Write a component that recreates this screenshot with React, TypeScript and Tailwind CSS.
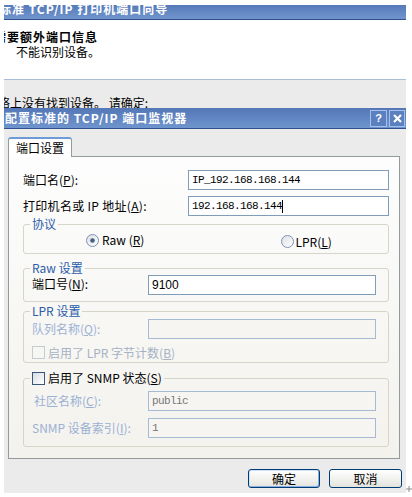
import type { ReactNode } from "react"

function Key({ k }: { k: string }) {
  return (
    <>
      (<span className="underline underline-offset-[1px]">{k}</span>)
    </>
  )
}

function Radio({ checked }: { checked?: boolean }) {
  return (
    <svg width="13" height="13" viewBox="0 0 13 13" className="shrink-0">
      <defs>
        <linearGradient id="radioFill" x1="0" y1="0" x2="1" y2="1">
          <stop offset="0%" stopColor="#dcdfe4" />
          <stop offset="100%" stopColor="#ffffff" />
        </linearGradient>
      </defs>
      <circle cx="6.5" cy="6.5" r="6" fill="url(#radioFill)" stroke="#7d93b2" />
      {checked && <circle cx="6.5" cy="6.5" r="2.3" fill="#45607f" />}
    </svg>
  )
}

function Checkbox({ disabled }: { disabled?: boolean }) {
  return (
    <div
      className={`w-[13px] h-[13px] shrink-0 border ${
        disabled
          ? "border-[#c5ccd6] bg-[#f6f6f3]"
          : "border-[#3b5676] bg-gradient-to-br from-[#d8dde4] to-white"
      }`}
    />
  )
}

function Group({ legend, children, className, inner }: { legend: ReactNode; children: ReactNode; className: string; inner: string }) {
  return (
    <fieldset className={`rounded-[3px] border border-[#d5d5c8] ${className}`}>
      <legend className="ml-[6px] px-[2px] h-[14px] leading-[14px] text-[#2b5caa]">{legend}</legend>
      <div className={inner}>{children}</div>
    </fieldset>
  )
}

function Field({ value, disabled, mono = true, caret }: { value: string; disabled?: boolean; mono?: boolean; caret?: boolean }) {
  return (
    <div
      className={`flex items-center h-[20px] border px-[3px] ${
        disabled ? "border-[#a7bad3] bg-[#f6f5f1] text-[#777777]" : "border-[#7f9db9] bg-white text-black"
      } ${mono ? "font-['Liberation_Mono',monospace] text-[11px] tracking-[-0.6px]" : "font-['Liberation_Sans',Arial,sans-serif] text-[12px]"}`}
    >
      <span className="whitespace-pre">{value}</span>
      {caret && <span className="w-px h-[13px] bg-black" />}
    </div>
  )
}

export default function App() {
  return (
    <div className="relative w-[412px] h-[497px] overflow-hidden bg-white text-[12px] leading-[14px] text-black font-['Noto_Sans_CJK_SC','Noto_Sans',sans-serif]">
      {/* wizard window behind */}
      <div className="ml-[4px] w-[402px] h-[493px] flex flex-col overflow-hidden">
        <div className="h-[5px] bg-white" />
        <div className="h-[15px] overflow-hidden bg-gradient-to-b from-[#5679b8] to-[#7196cd] border-b border-[#2f4f90]">
          <div className="-mt-[3px] -ml-[5px] font-bold text-white tracking-[1px] whitespace-nowrap">
            标准 TCP/IP 打印机端口向导
          </div>
        </div>
        <div className="h-[59px] bg-white">
          <div className="mt-[10px] -ml-[10px] font-bold tracking-[1px] whitespace-nowrap">需要额外端口信息</div>
          <div className="mt-[1px] ml-[12px] whitespace-nowrap">不能识别设备。</div>
        </div>
        <div className="h-px bg-[#a9bdd9]" />
        <div className="flex-1 bg-[#ebebeb]">
          <div className="mt-[16px] -ml-[18px] whitespace-nowrap">网络上没有找到设备。 请确定:</div>
        </div>
      </div>

      {/* dialog window on top */}
      <div className="absolute left-[4px] top-[108px] w-[402px] h-[385px] flex flex-col bg-[#ebebeb]">
        <div className="h-[21px] shrink-0 flex items-center bg-gradient-to-b from-[#5477b7] to-[#6f95cd] border-b border-[#2f4f90] pl-[1px] pr-[1px]">
          <span className="font-bold text-white tracking-[1px] whitespace-nowrap">配置标准的 TCP/IP 端口监视器</span>
          <div className="ml-auto flex gap-[2px]">
            <div className="w-[17px] h-[17px] border border-[#a5c0ea] bg-[#5a80bf] flex items-center justify-center text-white font-bold text-[11px] leading-none font-['Liberation_Sans',Arial,sans-serif]">
              ?
            </div>
            <div className="w-[16px] h-[17px] border border-[#a5c0ea] bg-[#5a80bf] flex items-center justify-center">
              <svg width="9" height="9" viewBox="0 0 9 9">
                <path d="M1 1 L8 8 M8 1 L1 8" stroke="white" strokeWidth="2.2" />
              </svg>
            </div>
          </div>
        </div>

        <div className="pt-[8px] pl-[4px]">
          <div className="relative z-10 -mb-px w-[64px] h-[20px] flex items-center justify-center bg-white border-x border-t-2 border-[#919b9c] border-t-[#6f9ad8] rounded-t-[3px]">
            端口设置
          </div>
          <div className="w-[392px] h-[303px] border border-[#919b9c] bg-gradient-to-b from-[#fdfdfd] to-[#f3f2ed] pt-[13px] pl-[14px] pr-[10px] flex flex-col">
            <div className="h-[20px] flex items-center">
              <span>
                端口名<Key k="P" />:
              </span>
              <div className="ml-auto w-[201px]">
                <Field value="IP_192.168.168.144" />
              </div>
            </div>
            <div className="mt-[6px] h-[20px] flex items-center">
              <span className="tracking-[0.3px]">
                打印机名或 IP 地址<Key k="A" />:
              </span>
              <div className="ml-auto w-[201px]">
                <Field value="192.168.168.144" caret />
              </div>
            </div>

            <Group legend="协议" className="mt-[1px]" inner="pb-[6px]">
              <div className="mt-[2px] h-[14px] flex items-center">
                <div className="ml-[62px] flex items-center gap-[3px]">
                  <Radio checked />
                  <span>
                    Raw <Key k="R" />
                  </span>
                </div>
                <div className="ml-[137px] mt-[3px] flex items-center gap-[1px]">
                  <Radio />
                  <span>
                    LPR<Key k="L" />
                  </span>
                </div>
              </div>
            </Group>

            <Group legend="Raw 设置" className="mt-[7px]" inner="pb-[6px] pl-[8px] pr-[12px]">
              <div className="h-[20px] flex items-center">
                <span className="-mt-[3px]">
                  端口号<Key k="N" />:
                </span>
                <div className="ml-auto w-[228px]">
                  <Field value="9100" mono={false} />
                </div>
              </div>
            </Group>

            <Group legend="LPR 设置" className="mt-[2px]" inner="pb-[3px] pl-[8px] pr-[12px]">
              <div className="mt-[1px] h-[20px] flex items-center text-[#9bb1d4]">
                <span>
                  队列名称<Key k="Q" />:
                </span>
                <div className="ml-auto w-[228px]">
                  <Field value="" disabled />
                </div>
              </div>
              <div className="mt-[7px] h-[13px] flex items-center gap-[3px] text-[#a6b2c4]">
                <Checkbox disabled />
                <span>
                  启用了 LPR 字节计数<Key k="B" />
                </span>
              </div>
            </Group>

            <Group
              legend={
                <span className="flex items-center gap-[3px] text-black">
                  <Checkbox />
                  <span>
                    启用了 SNMP 状态<Key k="S" />
                  </span>
                </span>
              }
              className="mt-[8px]"
              inner="pb-[8px] pl-[8px] pr-[12px]"
            >
              <div className="mt-[6px] h-[20px] flex items-center text-[#9bb1d4]">
                <span className="ml-[2px]">
                  社区名称<Key k="C" />:
                </span>
                <div className="ml-auto w-[228px]">
                  <Field value="public" disabled />
                </div>
              </div>
              <div className="mt-[7px] h-[20px] flex items-center text-[#9bb1d4]">
                <span>
                  SNMP 设备索引<Key k="I" />:
                </span>
                <div className="ml-auto w-[228px]">
                  <Field value="1" disabled />
                </div>
              </div>
            </Group>
          </div>
        </div>

        <div className="mt-[10px] pr-[4px] flex justify-end gap-[9px]">
          <button className="w-[72px] h-[19px] rounded-[3px] border border-[#003c74] bg-gradient-to-b from-white to-[#e4e4de] shadow-[inset_-1px_-1px_0_#8aaee6,inset_1px_1px_0_#cfe2fb] leading-none">
            确定
          </button>
          <button className="w-[73px] h-[19px] rounded-[3px] border border-[#003c74] bg-gradient-to-b from-white to-[#e4e4de] leading-none">
            取消
          </button>
        </div>
      </div>

      {/* mouse cursor cross */}
      <svg className="absolute left-[406px] top-[486px]" width="6" height="6" viewBox="0 0 6 6">
        <path d="M3 0 V6 M0 3 H6" stroke="#8a8a8a" strokeWidth="1" />
      </svg>
    </div>
  )
}
